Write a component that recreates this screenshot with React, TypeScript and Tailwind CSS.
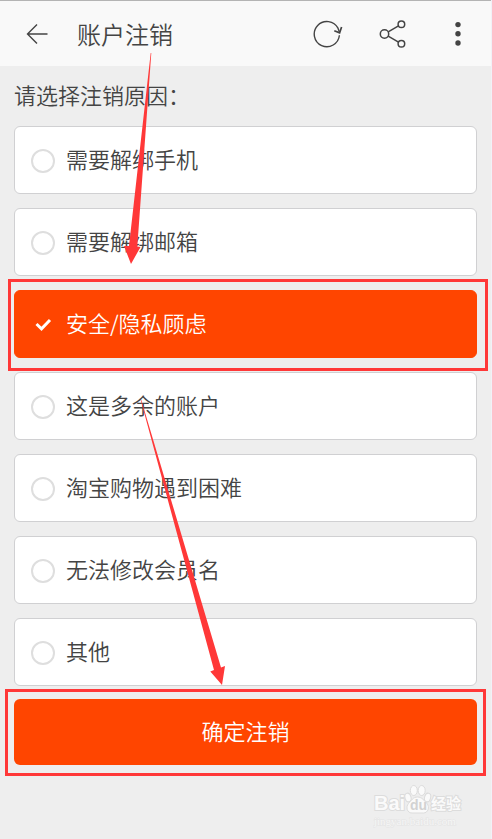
import { useState } from 'react';
import clsx from 'clsx';

const reasons = [
  '需要解绑手机',
  '需要解绑邮箱',
  '安全/隐私顾虑',
  '这是多余的账户',
  '淘宝购物遇到困难',
  '无法修改会员名',
  '其他',
];

function Header() {
  return (
    <header className="flex h-[66px] items-center border-t border-[#b4b4b4] bg-[#f9f9f9] pl-[26px] pr-6 text-[#444444]">
      <button type="button" aria-label="返回" className="shrink-0">
        <svg width="22" height="22" viewBox="0 0 22 22" fill="none" stroke="currentColor" strokeWidth="1.4">
          <path d="M11 1.5 1.5 11 11 20.5M1.5 11H21.5" />
        </svg>
      </button>
      <h1 className="ml-[29px] text-2xl">账户注销</h1>
      <div className="ml-auto flex items-center gap-9">
        <button type="button" aria-label="刷新">
          <svg width="30" height="28" viewBox="0 0 30 28" fill="none" stroke="currentColor" strokeWidth="1.4">
            <path d="M26.4 15.3A12.6 12.6 0 1 1 25 8.2L26.5 12.2" />
            <path d="M21.3 10.8 26.6 12.8 28.6 7" strokeWidth="1.7" />
          </svg>
        </button>
        <button type="button" aria-label="分享">
          <svg width="28" height="28" viewBox="0 0 28 28" fill="none" stroke="currentColor" strokeWidth="1.5">
            <circle cx="5.5" cy="14" r="4.2" />
            <circle cx="22.4" cy="4.2" r="3.3" />
            <circle cx="22.4" cy="23.8" r="3.3" />
            <path d="M9.2 11.8 19.5 5.9M9.2 16.2 19.5 22.1" />
          </svg>
        </button>
        <button type="button" aria-label="更多" className="ml-1.5">
          <svg width="18" height="26" viewBox="0 0 18 26" fill="currentColor">
            <circle cx="9" cy="3.6" r="2.7" />
            <circle cx="9" cy="12.8" r="2.7" />
            <circle cx="9" cy="22" r="2.7" />
          </svg>
        </button>
      </div>
    </header>
  );
}

function Watermark() {
  return (
    <svg className="ml-auto mr-6 mt-[18px]" width="94" height="46" viewBox="0 0 94 46" fill="#fafafa" stroke="#dcdcdc" strokeWidth="1" aria-label="Baidu 经验">
      <g fontWeight="700" paintOrder="stroke">
        <text x="1" y="27" fontSize="20" strokeWidth="2" fontFamily="Liberation Sans, sans-serif">Bai</text>
        <text x="58" y="26" fontSize="15" strokeWidth="2" fontFamily="Noto Sans CJK SC, sans-serif">经验</text>
      </g>
      <ellipse cx="35" cy="14.5" rx="3" ry="4.4" transform="rotate(-15 35 14.5)" />
      <ellipse cx="40.8" cy="7.5" rx="3.5" ry="5" />
      <ellipse cx="48.7" cy="7.5" rx="3.5" ry="5" />
      <ellipse cx="54.6" cy="14.5" rx="3" ry="4.4" transform="rotate(15 54.6 14.5)" />
      <path d="M44.5 14C49 14 51 17.5 54 20.5C57 24 55 30 50.5 30H39C34 30 32.5 24 35.5 20.5C38.5 17.5 40 14 44.5 14Z" />
      <text x="37" y="27" fontSize="14" fontWeight="700" fontFamily="Liberation Sans, sans-serif" fill="#d2d2d2" stroke="none">du</text>
      <text x="1" y="42" fontSize="11" fontFamily="Liberation Serif, serif" paintOrder="stroke" stroke="#e4e4e4" fill="#f6f6f6">jingyan.baidu.com</text>
    </svg>
  );
}

function Arrows() {
  return (
    <svg className="pointer-events-none absolute left-0 top-0" width="240" height="700" viewBox="0 0 240 700" fill="#ff3838" aria-hidden="true">
      <path d="M151.3 53H150.7L129 246H124L131 264L140.5 247L137.3 246.5Z" />
      <path d="M140.7 400H141.3L221 667.5L225 666L222 685L210.3 671.5L214 670Z" />
    </svg>
  );
}

export default function App() {
  const [selected, setSelected] = useState(2);

  return (
    <div className="relative min-h-screen overflow-hidden border-r border-[#f1f1f8] bg-[#eeeeee] font-['Noto_Sans_CJK_SC',sans-serif] font-[350] text-[#444444]">
      <Header />
      <form className="px-3.5 pt-3" onSubmit={(e) => e.preventDefault()}>
        <fieldset>
          <legend className="text-[22px] leading-8">请选择注销原因：</legend>
          <div className="mt-4 flex flex-col gap-3.5">
            {reasons.map((reason, i) => (
              <div key={reason} className="relative">
                <label
                  className={clsx(
                    'flex h-[68px] items-center rounded-md border pb-1 pl-4 text-[22px]',
                    i === selected ? 'border-[#ff4500] bg-[#ff4500] text-white' : 'border-[#d0d0d2] bg-white',
                  )}
                >
                  <span className="relative mt-1.5 flex">
                    <input
                      type="radio"
                      name="reason"
                      checked={i === selected}
                      onChange={() => setSelected(i)}
                      className="size-6 appearance-none rounded-full border-2 border-[#dedede] checked:border-transparent"
                    />
                    {i === selected && (
                      <svg className="pointer-events-none absolute inset-0" width="24" height="24" viewBox="0 0 24 24" fill="none" stroke="currentColor" strokeWidth="3">
                        <path d="M5.5 11 10.5 15.8 19 7" />
                      </svg>
                    )}
                  </span>
                  <span className="ml-[11px] leading-8">{reason}</span>
                </label>
                {/* highlight frame */}
                {i === 2 && (
                  <div className="pointer-events-none absolute -bottom-[13px] -left-1.5 -right-[11px] -top-[11px] z-10 border-3 border-[#ff3838]" />
                )}
              </div>
            ))}
          </div>
        </fieldset>
        <div className="relative mt-[13px]">
          <button type="submit" className="h-[66px] w-full rounded-md bg-[#ff4500] pb-1 text-[22px] text-white">
            确定注销
          </button>
          <div className="pointer-events-none absolute -bottom-[11px] -left-[9px] -right-[9px] -top-2.5 border-3 border-[#ff3838]" />
        </div>
      </form>
      <Watermark />
      <Arrows />
    </div>
  );
}
